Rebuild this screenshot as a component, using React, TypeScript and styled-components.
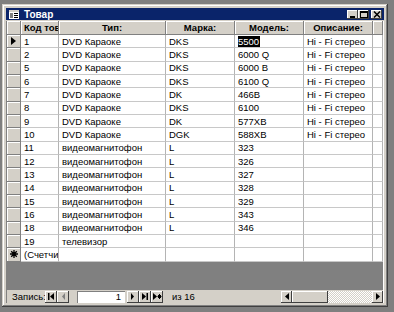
import styled, { createGlobalStyle } from 'styled-components';

const GlobalStyle = createGlobalStyle`
  html, body {
    margin: 0;
    padding: 0;
    background: #7f7f7f;
  }
  body {
    width: 394px;
    height: 312px;
    overflow: hidden;
    font-family: "Liberation Sans", Arial, sans-serif;
  }
`;

const COLS = '14px 38px 107px 69px 69px 69px 10px';

type Item = {
  id: string;
  kind: string;
  brand: string;
  model: string;
  note: string;
};

const items: Item[] = [
  { id: '1', kind: 'DVD Караоке', brand: 'DKS', model: '5500', note: 'Hi - Fi стерео' },
  { id: '2', kind: 'DVD Караоке', brand: 'DKS', model: '6000 Q', note: 'Hi - Fi стерео' },
  { id: '5', kind: 'DVD Караоке', brand: 'DKS', model: '6000 B', note: 'Hi - Fi стерео' },
  { id: '6', kind: 'DVD Караоке', brand: 'DKS', model: '6100 Q', note: 'Hi - Fi стерео' },
  { id: '7', kind: 'DVD Караоке', brand: 'DK', model: '466B', note: 'Hi - Fi стерео' },
  { id: '8', kind: 'DVD Караоке', brand: 'DKS', model: '6100', note: 'Hi - Fi стерео' },
  { id: '9', kind: 'DVD Караоке', brand: 'DK', model: '577XB', note: 'Hi - Fi стерео' },
  { id: '10', kind: 'DVD Караоке', brand: 'DGK', model: '588XB', note: 'Hi - Fi стерео' },
  { id: '11', kind: 'видеомагнитофон', brand: 'L', model: '323', note: '' },
  { id: '12', kind: 'видеомагнитофон', brand: 'L', model: '326', note: '' },
  { id: '13', kind: 'видеомагнитофон', brand: 'L', model: '327', note: '' },
  { id: '14', kind: 'видеомагнитофон', brand: 'L', model: '328', note: '' },
  { id: '15', kind: 'видеомагнитофон', brand: 'L', model: '329', note: '' },
  { id: '16', kind: 'видеомагнитофон', brand: 'L', model: '343', note: '' },
  { id: '18', kind: 'видеомагнитофон', brand: 'L', model: '346', note: '' },
  { id: '19', kind: 'телевизор', brand: '', model: '', note: '' },
];

const App = () => {
  return (
    <>
      <GlobalStyle />
      <Page>
        <Window>
          <TitleBar>
            <TitleIcon width="10" height="9" viewBox="0 0 10 9">
              <rect x="0" y="0" width="10" height="9" fill="#fff" />
              <rect x="0" y="0" width="10" height="2" fill="#d4d0c8" />
              <rect x="1" y="3" width="3" height="5" fill="#808080" />
              <rect x="5" y="3" width="4" height="1" fill="#000" />
              <rect x="5" y="5" width="4" height="1" fill="#000" />
              <rect x="5" y="7" width="4" height="1" fill="#000" />
            </TitleIcon>
            <Title>Товар</Title>
            <TitleButtons>
              <CaptionButton>
                <svg width="8" height="7" viewBox="0 0 8 7">
                  <rect x="1" y="5" width="5" height="2" fill="#000" />
                </svg>
              </CaptionButton>
              <CaptionButton>
                <svg width="8" height="7" viewBox="0 0 8 7">
                  <rect x="0.5" y="0.5" width="7" height="6" fill="none" stroke="#000" />
                  <rect x="0" y="0" width="8" height="2" fill="#000" />
                </svg>
              </CaptionButton>
              <CloseButton>
                <svg width="8" height="7" viewBox="0 0 8 7">
                  <path d="M1 0.5 L7 6.5 M7 0.5 L1 6.5" stroke="#000" strokeWidth="1.5" />
                </svg>
              </CloseButton>
            </TitleButtons>
          </TitleBar>
          <Client>
            <HeaderRow>
              <HeadCell />
              <HeadCell $left>Код товара</HeadCell>
              <HeadCell>Тип:</HeadCell>
              <HeadCell>Марка:</HeadCell>
              <HeadCell>Модель:</HeadCell>
              <HeadCell>Описание:</HeadCell>
              <HeadCell />
            </HeaderRow>
            {items.map((item, i) => (
              <Row key={item.id}>
                <Selector>
                  {i === 0 && (
                    <svg width="5" height="8" viewBox="0 0 5 8">
                      <polygon points="0,0 5,4 0,8" fill="#000" />
                    </svg>
                  )}
                </Selector>
                <Cell>{item.id}</Cell>
                <Cell>{item.kind}</Cell>
                <Cell>{item.brand}</Cell>
                <Cell>{i === 0 ? <Selected>{item.model}</Selected> : item.model}</Cell>
                <Cell>{item.note}</Cell>
                <Cell />
              </Row>
            ))}
            <Row>
              <Selector>
                <svg width="8" height="8" viewBox="0 0 8 8">
                  <path d="M4 0 V8 M0 4 H8 M1.2 1.2 L6.8 6.8 M6.8 1.2 L1.2 6.8" stroke="#000" strokeWidth="1.3" />
                </svg>
              </Selector>
              <Cell>(Счетчик)</Cell>
              <Cell />
              <Cell />
              <Cell />
              <Cell />
              <Cell />
            </Row>
            <Empty />
            <NavBar>
              <NavLabel>Запись:</NavLabel>
              <NavButton>
                <svg width="8" height="7" viewBox="0 0 8 7">
                  <rect x="1" y="0" width="1.5" height="7" fill="#000" />
                  <polygon points="7,0 3,3.5 7,7" fill="#000" />
                </svg>
              </NavButton>
              <NavButton>
                <svg width="8" height="7" viewBox="0 0 8 7">
                  <polygon points="6,0 3,3.5 6,7" fill="#808080" />
                </svg>
              </NavButton>
              <RecordBox>1</RecordBox>
              <NavButton>
                <svg width="8" height="7" viewBox="0 0 8 7">
                  <polygon points="2,0 5,3.5 2,7" fill="#000" />
                </svg>
              </NavButton>
              <NavButton>
                <svg width="8" height="7" viewBox="0 0 8 7">
                  <polygon points="1,0 5,3.5 1,7" fill="#000" />
                  <rect x="5.5" y="0" width="1.5" height="7" fill="#000" />
                </svg>
              </NavButton>
              <NavButton>
                <svg width="9" height="7" viewBox="0 0 9 7">
                  <polygon points="0,0 4,3.5 0,7" fill="#000" />
                  <path d="M6.5 1 V6 M4.5 3.5 H8.5 M5 2 L8 5 M8 2 L5 5" stroke="#000" strokeWidth="1" />
                </svg>
              </NavButton>
              <NavCount>из 16</NavCount>
              <ScrollBar>
                <ScrollArrow>
                  <svg width="4" height="7" viewBox="0 0 4 7">
                    <polygon points="4,0 0,3.5 4,7" fill="#000" />
                  </svg>
                </ScrollArrow>
                <Thumb />
                <Track />
                <ScrollArrow>
                  <svg width="4" height="7" viewBox="0 0 4 7">
                    <polygon points="0,0 4,3.5 0,7" fill="#000" />
                  </svg>
                </ScrollArrow>
              </ScrollBar>
            </NavBar>
          </Client>
        </Window>
      </Page>
    </>
  );
};

const Page = styled.div`
  padding: 4px 0 0 2px;
`;

const Window = styled.div`
  box-sizing: border-box;
  width: 386px;
  height: 303px;
  padding: 4px;
  background: #d4d0c8;
  box-shadow: inset -1px -1px #404040, inset 1px 1px #d4d0c8,
    inset -2px -2px #808080, inset 2px 2px #fff;
  display: flex;
  flex-direction: column;
`;

const TitleBar = styled.div`
  height: 12px;
  margin-bottom: 1px;
  background: #0a246a;
  display: flex;
  align-items: center;
  padding: 0 2px 0 3px;
`;

const TitleIcon = styled.svg`
  flex: none;
  margin-right: 5px;
`;

const Title = styled.span`
  color: #fff;
  font-weight: bold;
  font-size: 10px;
  flex: 1;
`;

const TitleButtons = styled.div`
  display: flex;
  align-items: center;
`;

const CaptionButton = styled.div`
  box-sizing: border-box;
  width: 11px;
  height: 9px;
  background: #d4d0c8;
  box-shadow: inset -1px -1px #404040, inset 1px 1px #fff;
  display: flex;
  align-items: center;
  justify-content: center;
`;

const CloseButton = styled(CaptionButton)`
  margin-left: 2px;
`;

const Client = styled.div`
  flex: 1;
  display: flex;
  flex-direction: column;
  border-left: 1px solid #808080;
  border-right: 1px solid #fff;
  font-size: 9.5px;
  color: #000;
`;

const HeaderRow = styled.div`
  display: grid;
  grid-template-columns: ${COLS};
  height: 14px;
`;

const HeadCell = styled.div<{ $left?: boolean }>`
  box-sizing: border-box;
  background: #d4d0c8;
  border-right: 1px solid #808080;
  border-bottom: 1px solid #808080;
  box-shadow: inset 1px 1px #fff;
  font-weight: bold;
  white-space: nowrap;
  overflow: hidden;
  display: flex;
  align-items: center;
  justify-content: ${(p) => (p.$left ? 'flex-start' : 'center')};
  padding-left: ${(p) => (p.$left ? '3px' : '0')};
`;

const Row = styled.div`
  display: grid;
  grid-template-columns: ${COLS};
  height: 13.33px;
`;

const Selector = styled.div`
  box-sizing: border-box;
  background: #d4d0c8;
  border-right: 1px solid #808080;
  border-bottom: 1px solid #808080;
  box-shadow: inset 1px 1px #fff;
  display: flex;
  align-items: center;
  justify-content: center;
`;

const Cell = styled.div`
  box-sizing: border-box;
  background: #fff;
  border-right: 1px solid #b4b4b4;
  border-bottom: 1px solid #c8c8c8;
  padding-left: 3px;
  white-space: nowrap;
  overflow: hidden;
  display: flex;
  align-items: center;
`;

const Selected = styled.span`
  background: #000;
  color: #fff;
  padding-right: 1px;
`;

const Empty = styled.div`
  flex: 1;
  background: #808080;
`;

const NavBar = styled.div`
  height: 13px;
  background: #d4d0c8;
  display: flex;
  align-items: center;
  font-size: 9.5px;
`;

const NavLabel = styled.span`
  box-sizing: border-box;
  width: 38px;
  padding-left: 5px;
`;

const NavButton = styled.div`
  box-sizing: border-box;
  width: 12px;
  height: 12px;
  background: #d4d0c8;
  box-shadow: inset -1px -1px #404040, inset 1px 1px #fff;
  display: flex;
  align-items: center;
  justify-content: center;
`;

const RecordBox = styled.div`
  box-sizing: border-box;
  width: 48px;
  height: 12px;
  margin: 0 2px 0 8px;
  background: #fff;
  box-shadow: inset 1px 1px #808080, inset -1px -1px #fff;
  text-align: right;
  padding-right: 4px;
  line-height: 12px;
`;

const NavCount = styled.span`
  margin-left: 9px;
  flex: 1;
`;

const ScrollBar = styled.div`
  display: flex;
  height: 12px;
`;

const ScrollArrow = styled.div`
  box-sizing: border-box;
  width: 11px;
  height: 12px;
  background: #d4d0c8;
  box-shadow: inset -1px -1px #404040, inset 1px 1px #fff;
  display: flex;
  align-items: center;
  justify-content: center;
`;

const Thumb = styled.div`
  box-sizing: border-box;
  width: 36px;
  background: #d4d0c8;
  box-shadow: inset -1px -1px #404040, inset 1px 1px #fff;
`;

const Track = styled.div`
  width: 44px;
  background: repeating-conic-gradient(#fff 0 25%, #d4d0c8 0 50%) 0 0 / 2px 2px;
`;

export default App;
